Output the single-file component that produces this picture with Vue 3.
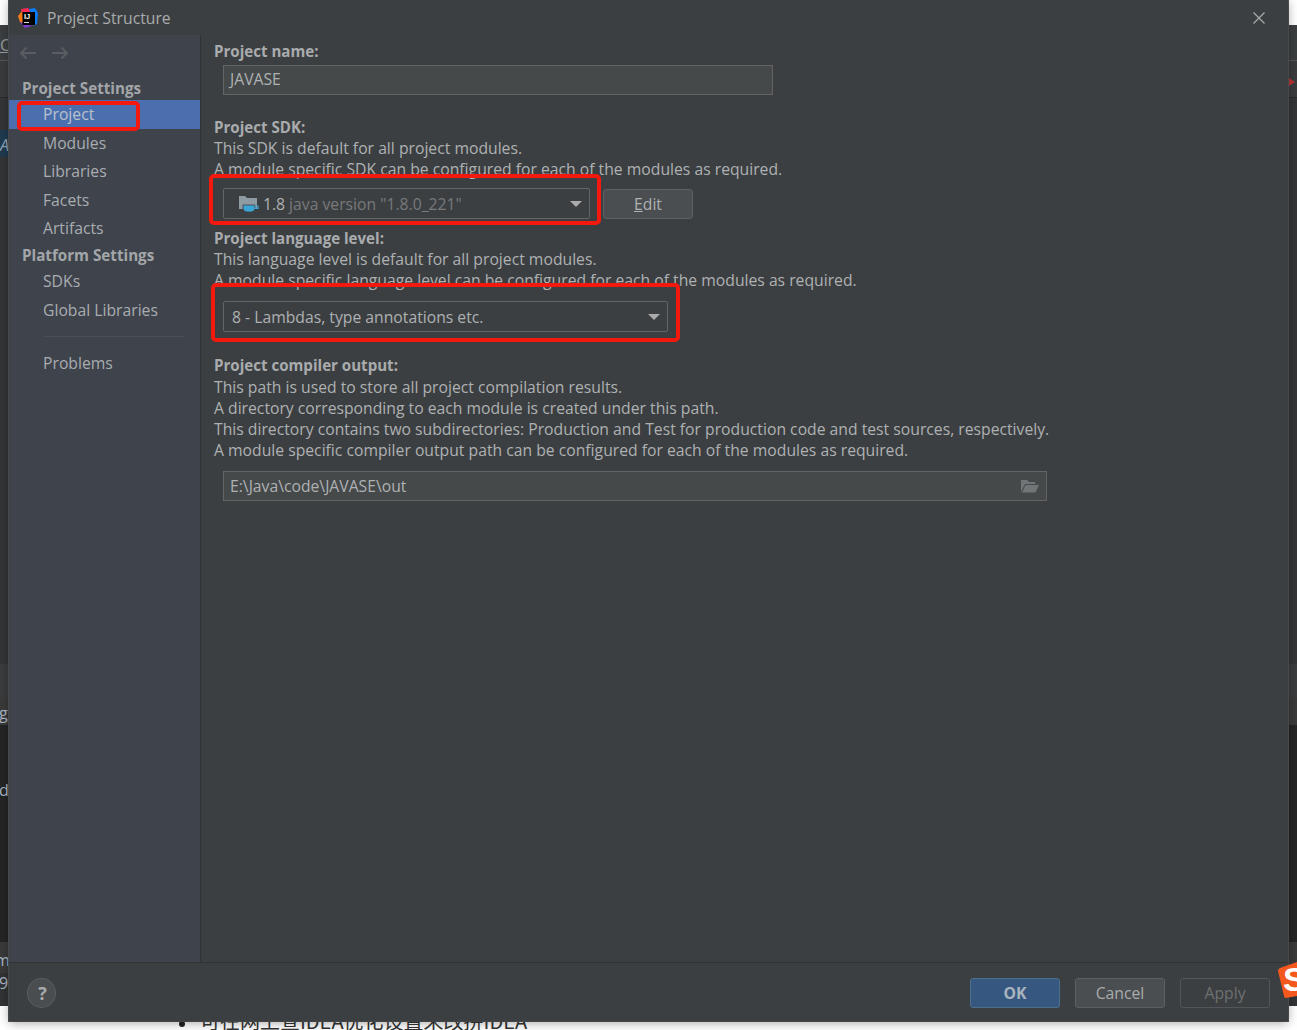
<template>
  <div class="desk">
    <div class="backdrop">
      <div class="band" v-for="b in bands" :key="b.top" :style="{ height: b.h + 'px', background: b.c }"></div>
      <div class="bg-white-bottom">
        <span class="bullet"></span>
        <span class="cn">可在网上查IDEA优化设置来改拼IDEA</span>
      </div>
      <div class="navy"></div>
      <span class="peek under" style="top:34px">C</span>
      <span class="peek ital" style="top:134px">A</span>
      <span class="peek" style="left:-1px;top:702px">g</span>
      <span class="peek" style="left:-1px;top:779px">d</span>
      <span class="peek" style="left:-5px;top:949px">m</span>
      <span class="peek" style="left:-1px;top:972px">9</span>
      <div class="bg-right-marker"></div>
    </div>

    <div class="dialog">
      <header class="titlebar">
        <svg class="logo" width="20" height="20" viewBox="0 0 20 20">
          <path d="M3 1 L10 0 L13 4 L5 8 Z" fill="#fe2857" />
          <path d="M0 8 L4 3 L6 17 L2 14 Z" fill="#f97a12" />
          <path d="M11 1 L17 0 L20 5 L19 16 L15 18 L13 6 Z" fill="#087cfa" />
          <path d="M2 14 L7 15 L14 18 L7 20 Z" fill="#7a3bd0" />
          <rect x="4.5" y="4" width="12.5" height="13" fill="#000" />
          <text x="6" y="11" class="logo-text">IJ</text>
          <rect x="6" y="14" width="5" height="1" fill="#ddd" />
        </svg>
        <span class="title">Project Structure</span>
        <svg class="close" width="14" height="14" viewBox="0 0 14 14">
          <path d="M1.5 1.5 L12.5 12.5 M12.5 1.5 L1.5 12.5" stroke="#a9abad" stroke-width="1.2" fill="none" />
        </svg>
      </header>

      <div class="main">
        <aside class="sidebar">
          <div class="nav-arrows">
            <svg width="18" height="14" viewBox="0 0 18 14"><path d="M17 7 H2 M7.5 1.5 L2 7 L7.5 12.5" stroke="#5b5e60" stroke-width="2" fill="none" /></svg>
            <svg width="18" height="14" viewBox="0 0 18 14"><path d="M1 7 H16 M10.5 1.5 L16 7 L10.5 12.5" stroke="#5b5e60" stroke-width="2" fill="none" /></svg>
          </div>
          <div class="group">Project Settings</div>
          <div class="item selected">Project</div>
          <div class="item">Modules</div>
          <div class="item">Libraries</div>
          <div class="item">Facets</div>
          <div class="item">Artifacts</div>
          <div class="group group-2">Platform Settings</div>
          <div class="item">SDKs</div>
          <div class="item">Global Libraries</div>
          <div class="sep"></div>
          <div class="item">Problems</div>
        </aside>

        <section class="content">
          <div class="label first">Project name:</div>
          <div class="field name-field">JAVASE</div>

          <div class="label sdk-label">Project SDK:</div>
          <p class="line">This SDK is default for all project modules.</p>
          <p class="line">A module specific SDK can be configured for each of the modules as required.</p>
          <div class="row sdk-row">
            <div class="combo sdk-combo">
              <svg class="jdk" width="20" height="18" viewBox="0 0 20 18">
                <path d="M0 1 H6 L8 3 H18 V14 H0 Z" fill="#8f9ba3" />
                <path d="M4 10 H16 V13 C16 15.5 14 17 11.5 17 H8.5 C6 17 4 15.5 4 13 Z" fill="#3ba5d8" stroke="#3c3f41" stroke-width="0.8" />
                <path d="M16 11 H19 V13.5 H15.5" fill="none" stroke="#3ba5d8" stroke-width="1.2" />
              </svg>
              <span class="ver">1.8</span><span class="ver-dim">java version "1.8.0_221"</span>
              <span class="caret"></span>
            </div>
            <div class="btn edit-btn"><span><u>E</u>dit</span></div>
          </div>

          <div class="label lang-label">Project language level:</div>
          <p class="line">This language level is default for all project modules.</p>
          <p class="line">A module specific language level can be configured for each of the modules as required.</p>
          <div class="combo lang-combo">
            <span>8 - Lambdas, type annotations etc.</span>
            <span class="caret"></span>
          </div>

          <div class="label out-label">Project compiler output:</div>
          <p class="line">This path is used to store all project compilation results.</p>
          <p class="line">A directory corresponding to each module is created under this path.</p>
          <p class="line">This directory contains two subdirectories: Production and Test for production code and test sources, respectively.</p>
          <p class="line">A module specific compiler output path can be configured for each of the modules as required.</p>
          <div class="field out-field">
            <span>E:\Java\code\JAVASE\out</span>
            <svg width="20" height="16" viewBox="0 0 20 16">
              <path d="M1 14 V2 H7 L9 4 H15 V6 H5 L1 14 Z" fill="#707577" />
              <path d="M5.5 7 H19 L15.5 14.5 H2 Z" fill="#707577" />
            </svg>
          </div>
        </section>
      </div>

      <footer class="footer">
        <div class="help">?</div>
        <div class="actions">
          <div class="btn ok">OK</div>
          <div class="btn cancel">Cancel</div>
          <div class="btn apply">Apply</div>
        </div>
      </footer>
    </div>

    <div class="mark" style="left:17px;top:101px;width:123px;height:30px"></div>
    <div class="mark" style="left:209px;top:174px;width:392px;height:51px"></div>
    <div class="mark" style="left:211px;top:283px;width:469px;height:59px"></div>

    <svg class="sogou" width="19" height="37" viewBox="0 0 19 37">
      <path d="M2 6 L19 0 V34 L8 36 Q6 36 6 34 L0 9 Q0 7 2 6 Z" fill="#f4581c" />
      <text x="5" y="29" class="sogou-s">S</text>
    </svg>
  </div>
</template>

<script setup>
const bands = [
  { top: 0, h: 25, c: '#ffffff' },
  { top: 25, h: 35, c: '#3c3f41' },
  { top: 60, h: 1, c: '#555759' },
  { top: 61, h: 36, c: '#3a3c3e' },
  { top: 97, h: 1, c: '#2b2b2b' },
  { top: 98, h: 566, c: '#333537' },
  { top: 664, h: 33, c: '#3c3d3e' },
  { top: 697, h: 28, c: '#3a3a3a' },
  { top: 725, h: 217, c: '#252525' },
  { top: 942, h: 31, c: '#3a3a3a' },
  { top: 973, h: 33, c: '#323334' }
]
</script>

<style>
html, body { margin: 0; padding: 0; background: #fff; overflow: hidden; }
</style>

<style scoped>
.desk {
  position: relative;
  width: 1297px;
  height: 1030px;
  overflow: hidden;
  font-family: "Open Sans", "Noto Sans", sans-serif;
  font-size: 15.72px;
  color: #b4b7b9;
}
.backdrop {
  position: absolute;
  inset: 0;
  isolation: isolate;
  display: flex;
  flex-direction: column;
}
.band { flex: none; }
.bg-white-bottom { position: relative; flex: 1; background: #fff; }
.navy { position: absolute; left: 0; top: 130px; width: 9px; height: 27px; background: #1f3a50; }
.peek { position: absolute; left: 0; font-size: 16px; line-height: 22px; color: #a9b7c6; }
.under { text-decoration: underline; color: #9a9c9e; }
.ital { font-style: italic; color: #8fa3b5; }
.bullet { position: absolute; left: 179px; top: 15px; width: 6px; height: 6px; border-radius: 50%; background: #222; }
.cn { position: absolute; left: 200px; top: 1px; font-family: "Noto Sans CJK SC", sans-serif; font-size: 20px; line-height: 28px; color: #333; white-space: nowrap; }
.bg-right-marker { position: absolute; left: 1289px; top: 78px; border-left: 6px solid #b33; border-top: 4px solid transparent; border-bottom: 4px solid transparent; }

.dialog {
  position: absolute;
  left: 9px;
  top: 0;
  width: 1279px;
  height: 1021px;
  background: #3c3f41;
  display: flex;
  flex-direction: column;
  box-shadow: 0 2px 10px rgba(0, 0, 0, 0.35), 0 0 0 1px #55585a;
}
.titlebar { height: 35px; display: flex; align-items: center; padding: 0 22px 0 9px; flex: none; }
.logo { flex: none; }
.logo-text { font-family: "Liberation Sans", sans-serif; font-size: 7.5px; font-weight: 700; fill: #fff; }
.title { margin-left: 9px; flex: 1; color: #a9abad; }
.main { flex: 1; display: flex; min-height: 0; }
.sidebar {
  width: 191px;
  flex: none;
  background: #3e434c;
  border-right: 1px solid #323232;
}
.nav-arrows { display: flex; gap: 14px; padding: 11px 0 0 10px; height: 27px; }
.group {
  margin-top: 2px;
  height: 25px;
  padding-left: 13px;
  line-height: 27px;
  font-weight: 700;
  color: #a3a6a8;
  font-size: 15.2px;
}
.group-2 { margin-top: -1px; }
.item { height: 28.6px; line-height: 29.6px; padding-left: 34px; color: #a9adb0; }
.selected { background: #4b6eaf; color: #b9c2cc; }
.sep { height: 1px; background: #4c5056; margin: 12px 15px 12px 36px; }

.content { flex: 1; padding: 5px 0 0 14px; min-width: 0; margin-left: -1px; }
.label { font-weight: 700; font-size: 15.1px; height: 21px; line-height: 21px; color: #a9acae; }
.first { line-height: 23px; }
.line { margin: 0; line-height: 21px; color: #aeb1b3; white-space: nowrap; }
.sdk-label { margin-top: 22px; }
.lang-label { margin-top: 9px; }
.out-label { margin-top: 23px; margin-bottom: 1px; }
.field {
  box-sizing: border-box;
  margin: 4px 0 0 9px;
  height: 30px;
  line-height: 26px;
  padding: 0 6px;
  background: #45494a;
  border: 1px solid #646464;
  color: #aeb1b3;
}
.name-field { width: 550px; }
.out-field { width: 824px; margin-top: 10px; display: flex; justify-content: space-between; align-items: center; }
.row { display: flex; align-items: flex-start; gap: 13px; margin: 8px 0 0 9px; }
.combo {
  box-sizing: border-box;
  position: relative;
  height: 31px;
  display: flex;
  align-items: center;
  background: #3c3f41;
  border: 1px solid #646464;
  border-radius: 2px;
  line-height: 28px;
}
.sdk-combo { width: 367px; padding-left: 15px; }
.lang-combo { width: 445px; margin: 10px 0 0 9px; padding-left: 8px; color: #aeb1b3; }
.jdk { flex: none; margin-right: 4px; }
.ver { color: #aeb1b3; margin-right: 4px; }
.ver-dim { color: #77797b; }
.caret {
  position: absolute;
  right: 7px;
  top: 12px;
  border-left: 6px solid transparent;
  border-right: 6px solid transparent;
  border-top: 6px solid #a9abad;
}
.btn {
  box-sizing: border-box;
  width: 90px;
  height: 30px;
  display: flex;
  align-items: center;
  justify-content: center;
  background: #4b4e50;
  border: 1px solid #5d6062;
  border-radius: 3px;
  color: #aeb1b3;
}
.edit-btn { margin-top: 1px; }
.edit-btn u { text-decoration-thickness: 1px; }

.footer {
  flex: none;
  box-sizing: border-box;
  height: 59px;
  border-top: 1px solid #323232;
  display: flex;
  align-items: center;
  justify-content: space-between;
  padding: 2px 18px 0 18px;
}
.help {
  width: 29px;
  height: 30px;
  border-radius: 50%;
  background: #4a4d4f;
  border: 1px solid #5a5d5f;
  box-sizing: border-box;
  display: flex;
  align-items: center;
  justify-content: center;
  padding-left: 2px;
  color: #a9abad;
  font-weight: 700;
  font-size: 18px;
}
.actions { display: flex; gap: 15px; }
.ok { background: #365880; border-color: #4c708c; color: #a9b4bf; font-weight: 700; }
.cancel { color: #a9abad; }
.apply { background: transparent; border-color: #535658; color: #6e7072; }

.mark {
  position: absolute;
  box-sizing: border-box;
  border: 4px solid #f3190f;
  border-radius: 5px;
  pointer-events: none;
}
.sogou { position: absolute; left: 1278px; top: 962px; }
.sogou-s { font-family: "Liberation Sans", sans-serif; font-weight: 700; font-size: 34px; fill: #fff; }
</style>
